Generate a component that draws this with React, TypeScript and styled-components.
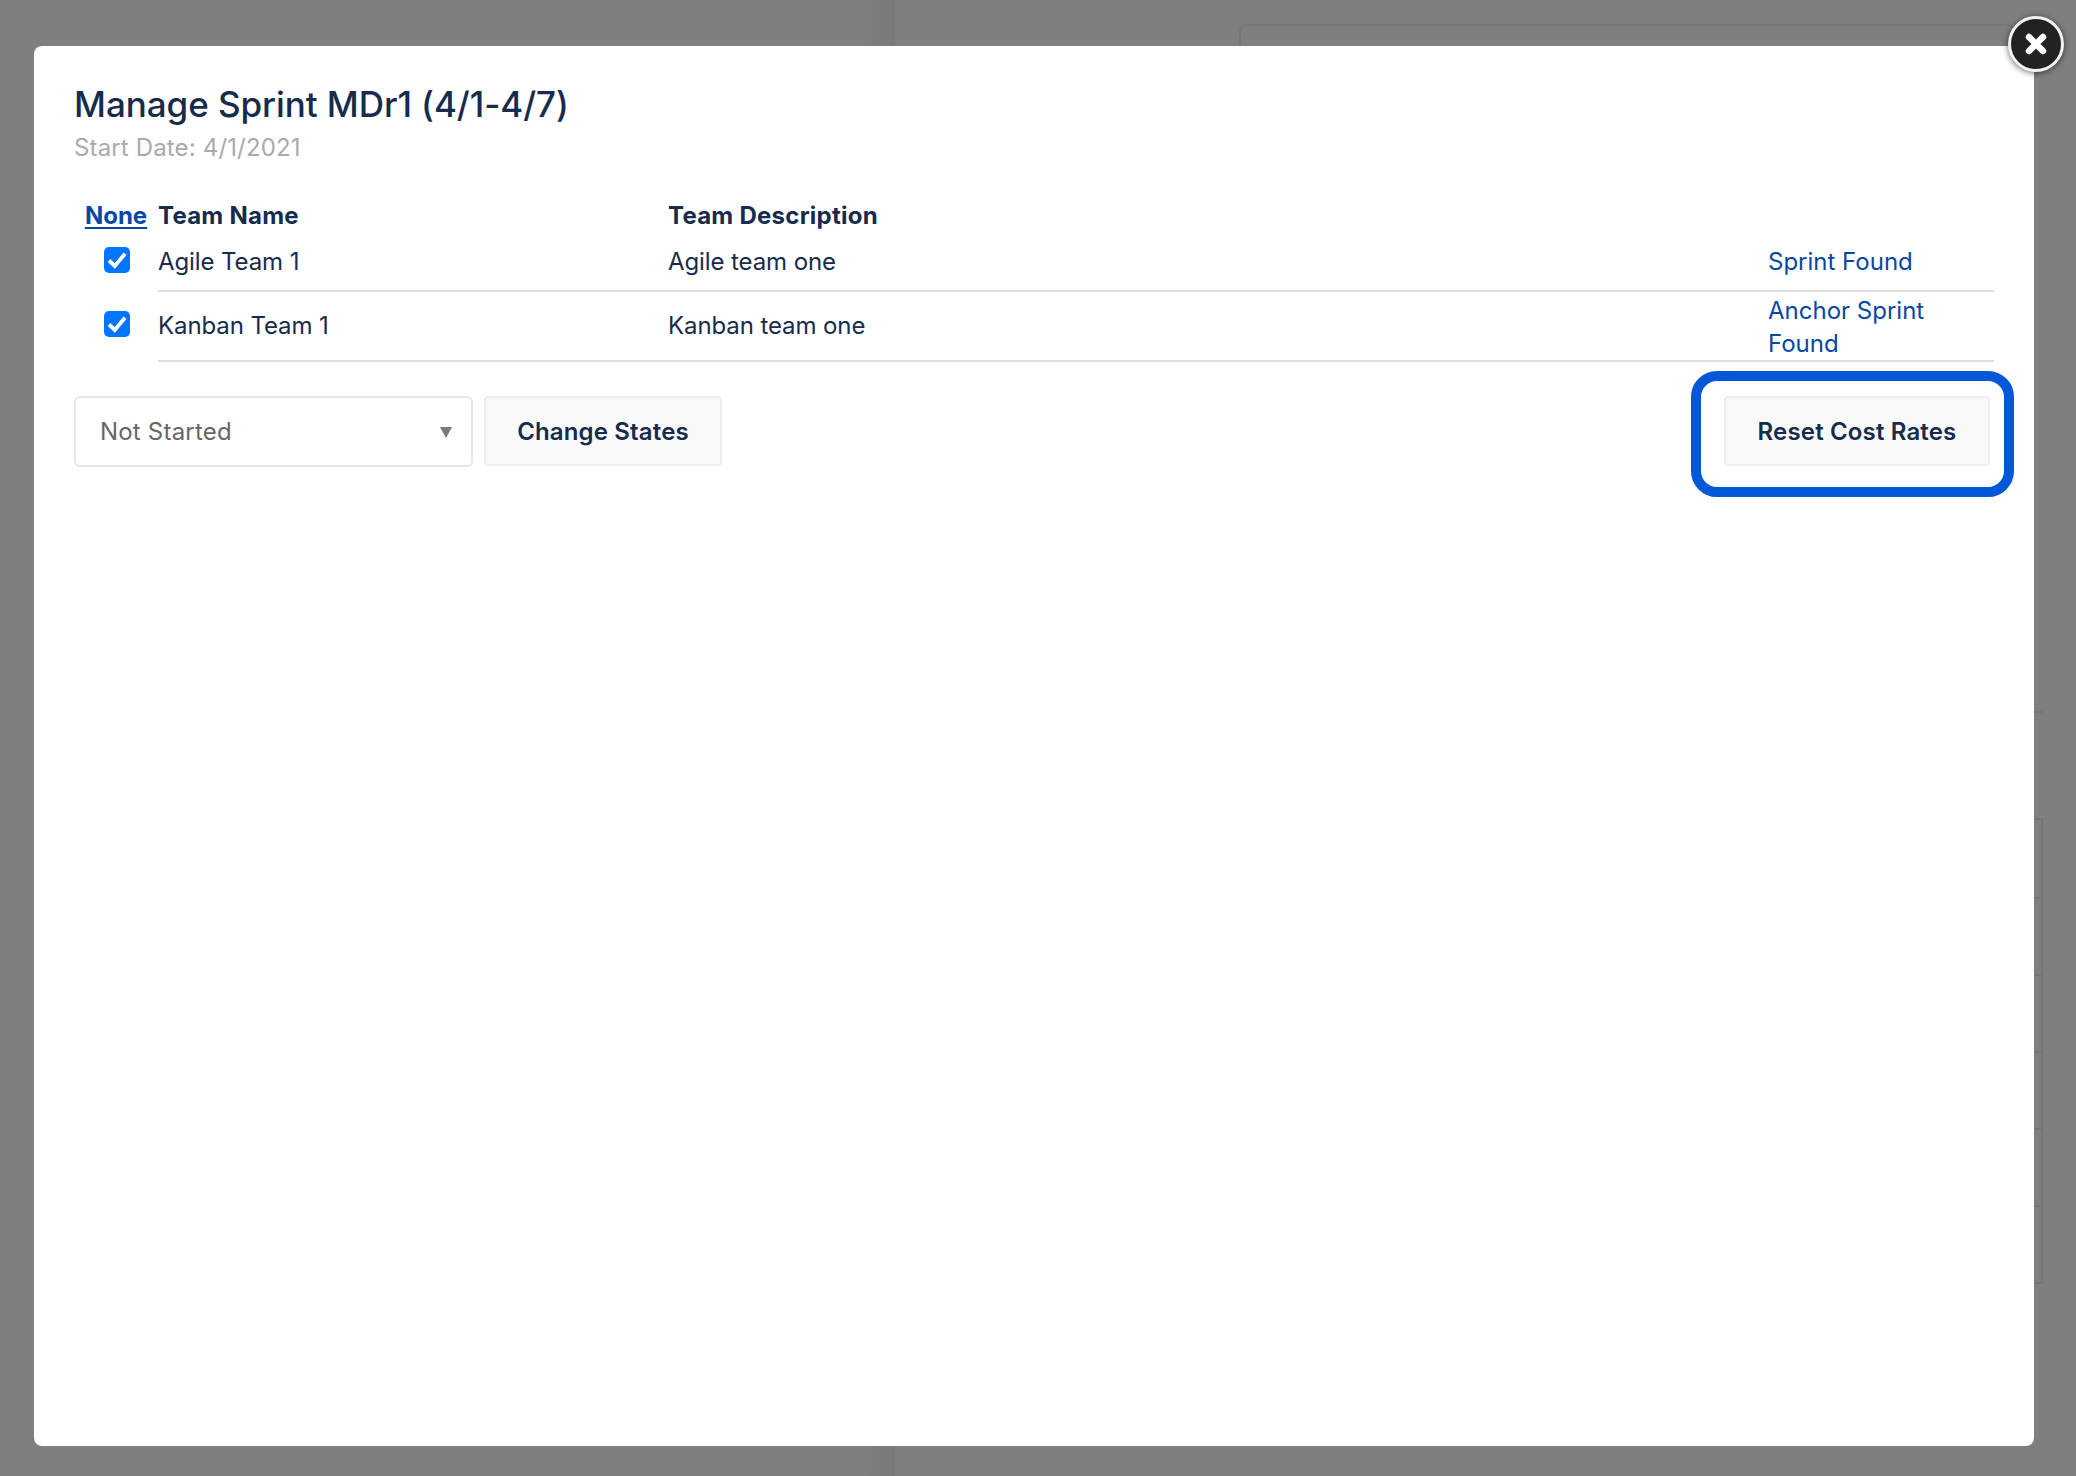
import React from "react";
import styled, { createGlobalStyle } from "styled-components";

const Global = createGlobalStyle`
  html, body { margin: 0; padding: 0; background: #7f7f7f; }
  body { font-family: Inter, "Liberation Sans", sans-serif; color: #172b4d; }
  * { box-sizing: border-box; }
`;

const Page = styled.div`
  position: relative;
  display: flex;
  width: 2076px;
  height: 1476px;
  overflow: hidden;
  background: #7f7f7f;
`;

const SidePane = styled.div`
  width: 894px;
  flex: none;
  background: linear-gradient(to right, #7f7f7f 0, #7f7f7f 860px, #7a7a7a 894px);
`;

const MainPane = styled.div`
  flex: 1;
  border-left: 1px solid #787878;
  padding: 24px 0 0 344px;
`;

const SummaryCard = styled.div`
  width: 776px;
  height: 660px;
  border: 2px solid #767676;
  border-bottom: 0;
  border-radius: 8px 8px 0 0;
`;

const HeadRule = styled.div`
  width: 804px;
  height: 2px;
  margin-top: 27px;
  background: #767676;
`;

const BackTable = styled.div`
  width: 804px;
  margin-top: 105px;
  border: 2px solid #767676;
  border-left: 0;
`;

const BackRow = styled.div`
  height: 77px;
  border-top: 2px solid #767676;
  &:first-child { border-top: 0; }
`;

const Modal = styled.div`
  position: absolute;
  left: 34px;
  top: 46px;
  width: 2000px;
  height: 1400px;
  padding: 36px 40px 0;
  background: #fff;
  border-radius: 8px;
`;

const CloseButton = styled.button`
  position: absolute;
  top: -30px;
  right: -30px;
  display: flex;
  align-items: center;
  justify-content: center;
  width: 56px;
  height: 56px;
  padding: 0;
  background: #222;
  border: 3px solid #f2f2f2;
  border-radius: 50%;
  box-shadow: 0 1px 6px rgba(0, 0, 0, 0.6);
`;

const Title = styled.h2`
  margin: 0;
  font-size: 35px;
  line-height: 44px;
  font-weight: 500;
  letter-spacing: -0.06px;
  color: #172b4d;
`;

const Subtitle = styled.div`
  margin-top: 5px;
  font-size: 24px;
  line-height: 34px;
  letter-spacing: 0.15px;
  color: #aaa;
`;

const TeamTable = styled.table`
  width: 1920px;
  margin-top: 33px;
  table-layout: fixed;
  border-collapse: separate;
  border-spacing: 0;
  font-size: 24px;
  line-height: 34px;
`;

const HeadCell = styled.th`
  height: 36px;
  padding: 0;
  font-weight: 700;
  letter-spacing: 0.25px;
  text-align: left;
  color: #172b4d;
`;

const NoneCell = styled(HeadCell)`
  letter-spacing: 0;
  text-align: center;
`;

const NoneLink = styled.a`
  color: #0747a6;
  text-decoration: underline;
  text-underline-offset: 3px;
`;

const CheckCell = styled.td`
  padding: 0 0 8px 2px;
  text-align: center;
  vertical-align: middle;
`;

const CheckBox = styled.span`
  display: inline-flex;
  align-items: center;
  justify-content: center;
  width: 26px;
  height: 26px;
  vertical-align: middle;
  background: #0075ff;
  border-radius: 5px;
`;

const Cell = styled.td<{ $tall?: boolean }>`
  height: ${(p) => (p.$tall ? "70px" : "58px")};
  padding: 0;
  border-bottom: 2px solid #ddd;
  vertical-align: middle;
  letter-spacing: -0.1px;
`;

const StatusCell = styled(Cell)`
  padding-top: ${(p) => (p.$tall ? "2px" : "0")};
  line-height: ${(p) => (p.$tall ? "33px" : "34px")};
  letter-spacing: 0;
`;

const StatusLink = styled.a`
  color: #0747a6;
`;

const Controls = styled.div`
  display: flex;
  align-items: flex-start;
  gap: 11px;
  width: 1916px;
  margin-top: 34px;
`;

const SelectWrap = styled.div`
  position: relative;
  width: 399px;
  height: 71px;
`;

const Select = styled.select`
  width: 100%;
  height: 100%;
  padding: 0 40px 0 24px;
  appearance: none;
  background: #fff;
  border: 2px solid #e6e6e6;
  border-radius: 6px;
  font: 400 24px Inter, "Liberation Sans", sans-serif;
  letter-spacing: 0.2px;
  color: #666;
`;

const Arrow = styled.span`
  position: absolute;
  top: 31px;
  right: 21px;
  width: 0;
  height: 0;
  border-left: 6px solid transparent;
  border-right: 6px solid transparent;
  border-top: 11px solid #7a7a7a;
  pointer-events: none;
`;

const Button = styled.button<{ $width: number }>`
  width: ${(p) => p.$width}px;
  height: 70px;
  padding: 0;
  background: #f9f9f9;
  border: 2px solid #eee;
  border-radius: 4px;
  font: 600 24px Inter, "Liberation Sans", sans-serif;
  letter-spacing: 0.15px;
  color: #172b4d;
`;

const ResetWrap = styled.div`
  position: relative;
  margin-left: auto;
`;

const Highlight = styled.div`
  position: absolute;
  left: -33px;
  top: -25px;
  width: 323px;
  height: 126px;
  border: 10px solid #0057d8;
  border-radius: 26px;
  pointer-events: none;
`;

const teams = [
  { name: "Agile Team 1", desc: "Agile team one", status: "Sprint Found", tall: false },
  { name: "Kanban Team 1", desc: "Kanban team one", status: "Anchor Sprint Found", tall: true },
];

export default function App() {
  return (
    <Page>
      <Global />
      <SidePane />
      <MainPane>
        <SummaryCard />
        <HeadRule />
        <BackTable>
          {[0, 1, 2, 3, 4, 5].map((i) => (
            <BackRow key={i} />
          ))}
        </BackTable>
      </MainPane>
      <Modal>
        <CloseButton aria-label="Close">
          <svg width="26" height="26" viewBox="0 0 26 26" aria-hidden="true">
            <path d="M6 6 L20 20 M20 6 L6 20" stroke="#fff" strokeWidth="6.5" strokeLinecap="round" />
          </svg>
        </CloseButton>
        <Title>Manage Sprint MDr1 (4/1-4/7)</Title>
        <Subtitle>Start Date: 4/1/2021</Subtitle>
        <TeamTable>
          <colgroup>
            <col style={{ width: 84 }} />
            <col style={{ width: 510 }} />
            <col style={{ width: 1100 }} />
            <col style={{ width: 226 }} />
          </colgroup>
          <thead>
            <tr>
              <NoneCell>
                <NoneLink href="#">None</NoneLink>
              </NoneCell>
              <HeadCell>Team Name</HeadCell>
              <HeadCell>Team Description</HeadCell>
              <HeadCell />
            </tr>
          </thead>
          <tbody>
            {teams.map((t) => (
              <tr key={t.name}>
                <CheckCell>
                  <CheckBox role="checkbox" aria-checked="true">
                    <svg width="26" height="26" viewBox="0 0 26 26" aria-hidden="true">
                      <path d="M5 13.5 L10.8 19 L21 6.8" fill="none" stroke="#fff" strokeWidth="3.8" />
                    </svg>
                  </CheckBox>
                </CheckCell>
                <Cell $tall={t.tall}>{t.name}</Cell>
                <Cell $tall={t.tall}>{t.desc}</Cell>
                <StatusCell $tall={t.tall}>
                  <StatusLink>{t.status}</StatusLink>
                </StatusCell>
              </tr>
            ))}
          </tbody>
        </TeamTable>
        <Controls>
          <SelectWrap>
            <Select defaultValue="Not Started">
              <option>Not Started</option>
            </Select>
            <Arrow />
          </SelectWrap>
          <Button $width={238}>Change States</Button>
          <ResetWrap>
            <Button $width={266}>Reset Cost Rates</Button>
            <Highlight />
          </ResetWrap>
        </Controls>
      </Modal>
    </Page>
  );
}
